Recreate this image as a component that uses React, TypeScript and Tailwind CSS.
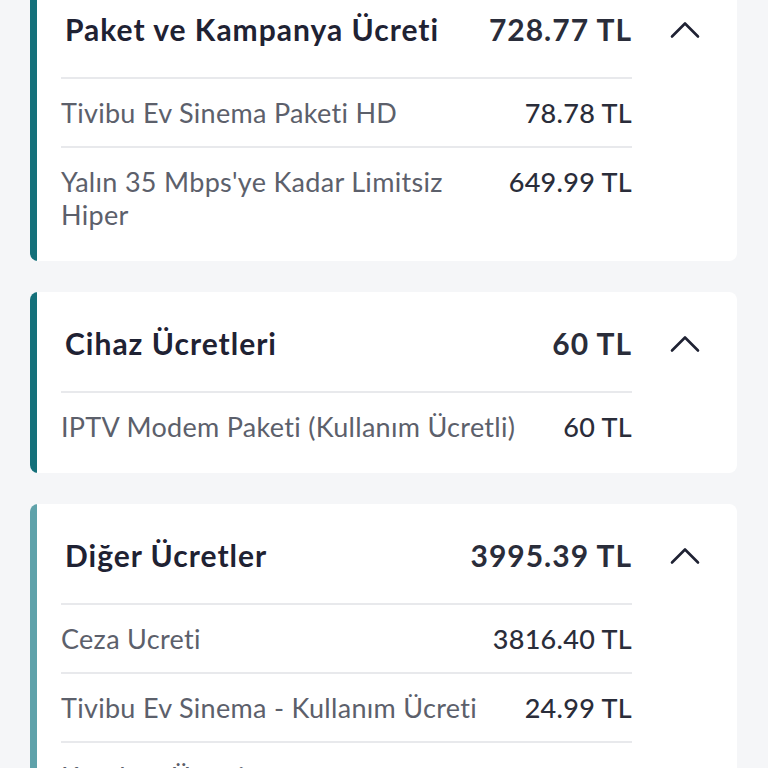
import React from 'react';

type Row = { label: string; amount: string };

interface Section {
    title: string;
    total: string;
    accent: string;
    rows: Row[];
}

const sections: Section[] = [
    {
        title: 'Paket ve Kampanya Ücreti',
        total: '728.77 TL',
        accent: 'bg-[#14707a]',
        rows: [
            { label: 'Tivibu Ev Sinema Paketi HD', amount: '78.78 TL' },
            { label: "Yalın 35 Mbps'ye Kadar Limitsiz Hiper", amount: '649.99 TL' },
        ],
    },
    {
        title: 'Cihaz Ücretleri',
        total: '60 TL',
        accent: 'bg-[#14707a]',
        rows: [{ label: 'IPTV Modem Paketi (Kullanım Ücretli)', amount: '60 TL' }],
    },
    {
        title: 'Diğer Ücretler',
        total: '3995.39 TL',
        accent: 'bg-[#5fa2aa]',
        rows: [
            { label: 'Ceza Ucreti', amount: '3816.40 TL' },
            { label: 'Tivibu Ev Sinema - Kullanım Ücreti', amount: '24.99 TL' },
            { label: 'Kurulum Ücreti', amount: '154.00 TL' },
        ],
    },
];

const ChevronUp = () => (
    <svg width="30" height="18" viewBox="0 0 30 18" fill="none">
        <path d="M2 15.5 L15 2.5 L28 15.5" stroke="#1f2233" strokeWidth="2.6" strokeLinecap="round" strokeLinejoin="round" />
    </svg>
);

const SectionCard: React.FC<{ section: Section }> = ({ section }) => (
    <div className="flex bg-white rounded-lg overflow-hidden">
        <div className={`w-[7px] shrink-0 ${section.accent}`} />
        <div className="flex-1 flex pb-[13px]">
            <div className="flex-1 pl-[24px]">
                <div className="h-[99px] pt-1 flex items-center justify-between gap-6 pl-1">
                    <span className="text-[30px] font-bold text-[#1f2233] tracking-[1px]">{section.title}</span>
                    <span className="text-[30px] font-bold text-[#2a2d3a] tracking-[1px] whitespace-nowrap">{section.total}</span>
                </div>
                {section.rows.map((row) => (
                    <div
                        key={row.label}
                        className="border-t-2 border-[#e8e9ec] py-[17px] flex justify-between gap-10 text-[27px] leading-[33px] tracking-[0.3px]"
                    >
                        <span className="text-[#5c606b]">{row.label}</span>
                        <span className="text-[#2a2d3a] font-medium whitespace-nowrap">{row.amount}</span>
                    </div>
                ))}
            </div>
            <div className="w-[105px] shrink-0 h-[99px] pt-1 flex items-center justify-center">
                <ChevronUp />
            </div>
        </div>
    </div>
);

export default function App() {
    return (
        <div
            className="h-[768px] overflow-hidden bg-[#f5f6f8] pl-[30px] pr-[31px]"
            style={{ fontFamily: 'Lato, "Noto Sans", sans-serif' }}
        >
            <div className="-mt-[22px] flex flex-col gap-[31px]">
                {sections.map((s) => (
                    <SectionCard key={s.title} section={s} />
                ))}
            </div>
        </div>
    );
}
